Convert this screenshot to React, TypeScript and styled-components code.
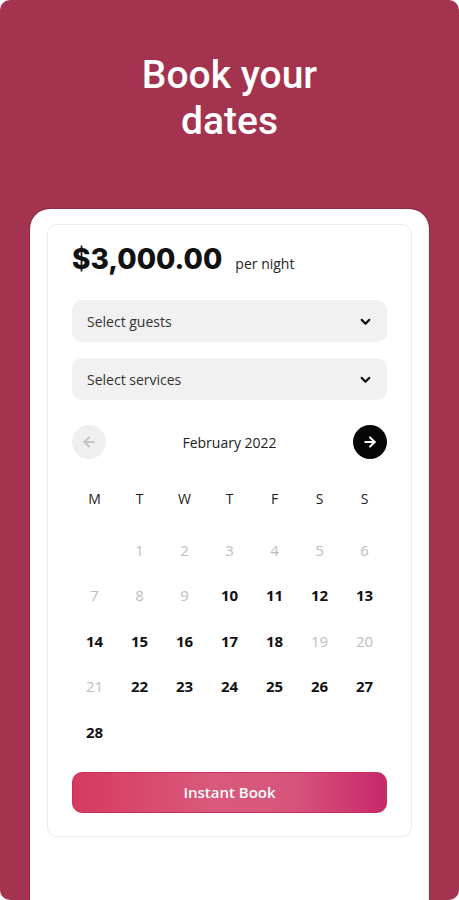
import styled, { createGlobalStyle } from "styled-components";

const GlobalStyle = createGlobalStyle`
  html, body {
    margin: 0;
    padding: 0;
    background: #ffffff;
  }
  * {
    box-sizing: border-box;
  }
`;

const Screen = styled.div`
  width: 459px;
  height: 900px;
  overflow: hidden;
  background: #a3334f;
  border-radius: 10px;
  display: flex;
  flex-direction: column;
  align-items: center;
`;

const Title = styled.h1`
  margin: 52px 0 0;
  font-family: Roboto, "Noto Sans", sans-serif;
  font-weight: 500;
  font-size: 39px;
  line-height: 46px;
  color: #ffffff;
  text-align: center;
`;

const Sheet = styled.div`
  margin-top: 65px;
  width: 399px;
  flex: 1;
  background: #ffffff;
  border-radius: 20px 20px 0 0;
  box-shadow: 0 0 0 1px rgba(110, 20, 40, 0.35);
  padding: 15px 17px 0;
`;

const Card = styled.div`
  border: 1px solid #ececec;
  border-radius: 10px;
  padding: 17px 24px 23px;
  display: flex;
  flex-direction: column;
`;

const PriceRow = styled.div`
  display: flex;
  align-items: baseline;
  gap: 13px;
  height: 40px;
`;

const Price = styled.span`
  font-family: Inter, "Noto Sans", sans-serif;
  font-weight: 800;
  font-size: 28px;
  color: #111111;
`;

const PerNight = styled.span`
  font-family: "Open Sans", sans-serif;
  font-size: 14px;
  color: #222222;
`;

const Select = styled.div<{ $top: number }>`
  margin-top: ${(p) => p.$top}px;
  height: 42px;
  border-radius: 10px;
  background: #f1f1f1;
  display: flex;
  align-items: center;
  justify-content: space-between;
  padding: 0 15px 0 15px;
  font-family: "Open Sans", sans-serif;
  font-size: 14px;
  color: #333333;
`;

const CalHeader = styled.div`
  margin-top: 25px;
  display: flex;
  align-items: center;
  justify-content: space-between;
`;

const NavButton = styled.div<{ $dark?: boolean }>`
  width: 34px;
  height: 34px;
  border-radius: 50%;
  background: ${(p) => (p.$dark ? "#050505" : "#efefef")};
  display: flex;
  align-items: center;
  justify-content: center;
`;

const Month = styled.span`
  font-family: "Open Sans", sans-serif;
  font-size: 14px;
  color: #222222;
`;

const Weekdays = styled.div`
  margin-top: 19px;
  display: grid;
  grid-template-columns: repeat(7, 1fr);
  height: 40px;
  align-items: center;
  margin-bottom: 9px;
`;

const Weekday = styled.span`
  text-align: center;
  font-family: "Open Sans", sans-serif;
  font-size: 14px;
  font-weight: 500;
  color: #222222;
`;

const Days = styled.div`
  display: grid;
  grid-template-columns: repeat(7, 1fr);
  grid-auto-rows: 45.5px;
  align-items: center;
`;

const Day = styled.span<{ $off?: boolean }>`
  text-align: center;
  font-family: "Open Sans", sans-serif;
  font-size: 15px;
  font-weight: ${(p) => (p.$off ? 500 : 700)};
  color: ${(p) => (p.$off ? "#bdbdbd" : "#111111")};
`;

const BookButton = styled.button`
  margin-top: 17px;
  height: 41px;
  border: 1px solid #c9305a;
  border-radius: 10px;
  background: linear-gradient(90deg, #d6395e 0%, #d95a7c 45%, #d7557c 70%, #c8276a 100%);
  color: #ffffff;
  font-family: "Open Sans", sans-serif;
  font-size: 15px;
  font-weight: 600;
`;

const Chevron = () => (
  <svg width="13" height="13" viewBox="0 0 24 24" fill="none" stroke="#111" strokeWidth="4" strokeLinecap="round" strokeLinejoin="round">
    <polyline points="5 9 12 16 19 9" />
  </svg>
);

const Arrow = ({ color, flip }: { color: string; flip?: boolean }) => (
  <svg width="16" height="16" viewBox="0 0 24 24" fill="none" stroke={color} strokeWidth="3" strokeLinecap="round" strokeLinejoin="round" style={flip ? { transform: "scaleX(-1)" } : undefined}>
    <line x1="5" y1="12" x2="19" y2="12" />
    <polyline points="12 5 19 12 12 19" />
  </svg>
);

const weekdays = ["M", "T", "W", "T", "F", "S", "S"];
const disabled = [1, 2, 3, 4, 5, 6, 7, 8, 9, 19, 20, 21];
const days = Array.from({ length: 28 }, (_, i) => i + 1);

const App = () => {
  return (
    <>
      <GlobalStyle />
      <Screen>
        <Title>
          Book your
          <br />
          dates
        </Title>
        <Sheet>
          <Card>
            <PriceRow>
              <Price>$3,000.00</Price>
              <PerNight>per night</PerNight>
            </PriceRow>
            <Select $top={18}>
              Select guests
              <Chevron />
            </Select>
            <Select $top={16}>
              Select services
              <Chevron />
            </Select>
            <CalHeader>
              <NavButton>
                <Arrow color="#c4c4c4" flip />
              </NavButton>
              <Month>February 2022</Month>
              <NavButton $dark>
                <Arrow color="#ffffff" />
              </NavButton>
            </CalHeader>
            <Weekdays>
              {weekdays.map((d, i) => (
                <Weekday key={i}>{d}</Weekday>
              ))}
            </Weekdays>
            <Days>
              <span />
              {days.map((d) => (
                <Day key={d} $off={disabled.includes(d)}>
                  {d}
                </Day>
              ))}
            </Days>
            <BookButton>Instant Book</BookButton>
          </Card>
        </Sheet>
      </Screen>
    </>
  );
};

export default App;
